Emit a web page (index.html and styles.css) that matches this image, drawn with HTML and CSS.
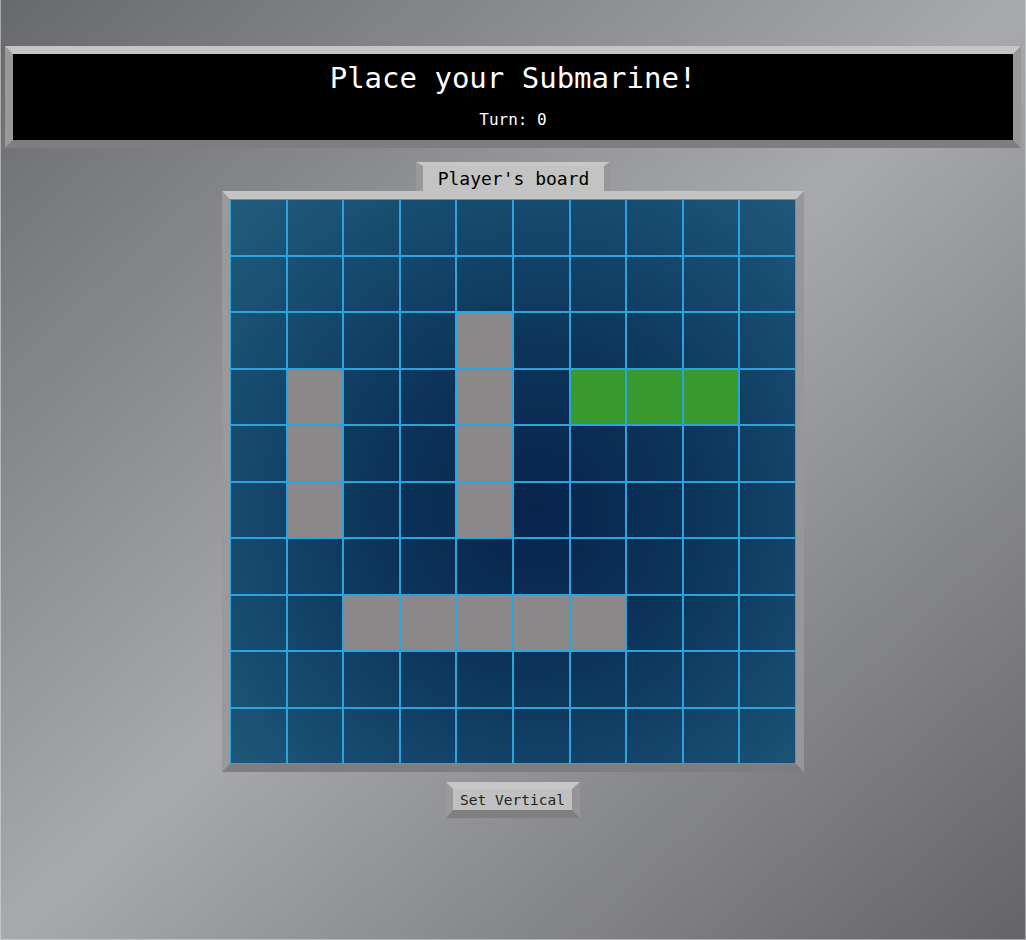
FILE: index.html
```html
<!DOCTYPE html>
<html lang="en">
<head>
<meta charset="utf-8">
<title>Battleship</title>
<link rel="stylesheet" href="styles.css">
</head>
<body>
<div class="page">
  <header class="banner">
    <h1 class="title">Place your Submarine!</h1>
    <div class="turn">Turn: 0</div>
  </header>
  <main class="game">
    <div class="tab">Player's board</div>
    <div class="board">
      <div class="grid">
        <div class="cell"></div><div class="cell"></div><div class="cell"></div><div class="cell"></div><div class="cell"></div><div class="cell"></div><div class="cell"></div><div class="cell"></div><div class="cell"></div><div class="cell"></div>
        <div class="cell"></div><div class="cell"></div><div class="cell"></div><div class="cell"></div><div class="cell"></div><div class="cell"></div><div class="cell"></div><div class="cell"></div><div class="cell"></div><div class="cell"></div>
        <div class="cell"></div><div class="cell"></div><div class="cell"></div><div class="cell"></div><div class="cell ship"></div><div class="cell"></div><div class="cell"></div><div class="cell"></div><div class="cell"></div><div class="cell"></div>
        <div class="cell"></div><div class="cell ship"></div><div class="cell"></div><div class="cell"></div><div class="cell ship"></div><div class="cell"></div><div class="cell preview"></div><div class="cell preview"></div><div class="cell preview"></div><div class="cell"></div>
        <div class="cell"></div><div class="cell ship"></div><div class="cell"></div><div class="cell"></div><div class="cell ship"></div><div class="cell"></div><div class="cell"></div><div class="cell"></div><div class="cell"></div><div class="cell"></div>
        <div class="cell"></div><div class="cell ship"></div><div class="cell"></div><div class="cell"></div><div class="cell ship"></div><div class="cell"></div><div class="cell"></div><div class="cell"></div><div class="cell"></div><div class="cell"></div>
        <div class="cell"></div><div class="cell"></div><div class="cell"></div><div class="cell"></div><div class="cell"></div><div class="cell"></div><div class="cell"></div><div class="cell"></div><div class="cell"></div><div class="cell"></div>
        <div class="cell"></div><div class="cell"></div><div class="cell ship"></div><div class="cell ship"></div><div class="cell ship"></div><div class="cell ship"></div><div class="cell ship"></div><div class="cell"></div><div class="cell"></div><div class="cell"></div>
        <div class="cell"></div><div class="cell"></div><div class="cell"></div><div class="cell"></div><div class="cell"></div><div class="cell"></div><div class="cell"></div><div class="cell"></div><div class="cell"></div><div class="cell"></div>
        <div class="cell"></div><div class="cell"></div><div class="cell"></div><div class="cell"></div><div class="cell"></div><div class="cell"></div><div class="cell"></div><div class="cell"></div><div class="cell"></div><div class="cell"></div>
      </div>
    </div>
    <button class="btn" type="button">Set Vertical</button>
  </main>
</div>
</body>
</html>
```
FILE: styles.css
```css
html, body {
  margin: 0;
  padding: 0;
  height: 100%;
}
body {
  font-family: "DejaVu Sans Mono", "Liberation Mono", monospace;
  background: linear-gradient(to bottom right, #68696c 0%, #a7a9ac 50%, #646467 100%);
}
.page {
  box-sizing: border-box;
  min-height: 100vh;
  padding-top: 46px;
  border-left: 1px solid rgba(220, 222, 225, 0.55);
  border-right: 1px solid rgba(220, 222, 225, 0.55);
  border-bottom: 1px solid rgba(220, 222, 225, 0.55);
}
.banner {
  margin: 0 4px;
  background: #000;
  border-style: solid;
  border-width: 8px;
  border-color: #c4c4c4 #979797 #7e7e7e #999999;
  padding: 7px 0 11px;
  text-align: center;
  color: #fff;
}
.title {
  margin: 0;
  font-size: 29px;
  line-height: 34px;
  font-weight: normal;
}
.turn {
  margin-top: 15px;
  font-size: 16px;
  line-height: 19px;
}
.game {
  display: flex;
  flex-direction: column;
  align-items: center;
  padding-top: 14px;
}
.tab {
  background: #c3c3c3;
  border-style: solid;
  border-width: 4px 6px 0 7px;
  border-color: #c8c8c8 #979797 transparent #999999;
  padding: 0 15px;
  height: 25px;
  line-height: 25px;
  font-size: 18px;
  color: #000;
}
.board {
  border-style: solid;
  border-width: 8px;
  border-color: #c4c4c4 #979797 #7e7e7e #999999;
}
.grid {
  width: 566px;
  height: 565px;
  display: grid;
  grid-template-columns: repeat(10, 1fr);
  grid-template-rows: repeat(10, 1fr);
  background: radial-gradient(ellipse farthest-corner at 54% 55%, #09234d 0%, #0c3359 35%, #164a6f 70%, #225d7d 100%);
}
.cell {
  border: 1px solid #29a4dd;
}
.ship {
  background: #8a8888;
}
.preview {
  background: #389a2e;
}
.btn {
  margin-top: 10px;
  font-family: "DejaVu Sans Mono", "Liberation Mono", monospace;
  font-size: 14.5px;
  line-height: 22px;
  height: 36px;
  padding: 0 7px;
  color: #222;
  background: #c0c0c0;
  border-style: solid;
  border-width: 7px 8px 8px 7px;
  border-color: #c6c6c6 #959595 #7f7f7f #9a9a9a;
  cursor: pointer;
}
```
